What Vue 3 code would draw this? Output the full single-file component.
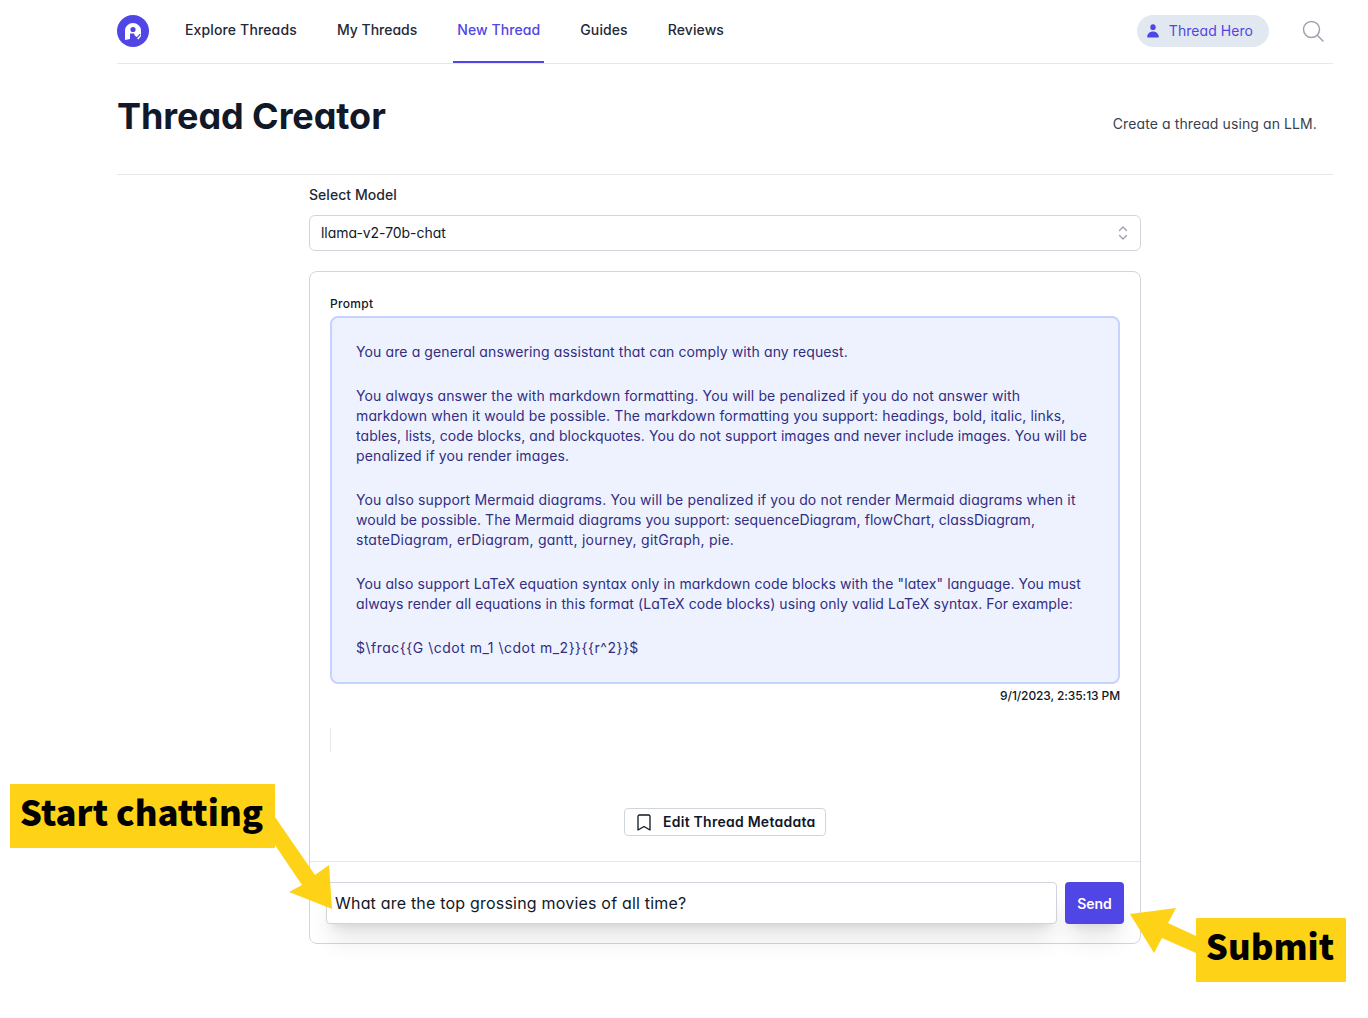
<script setup>
// ls: letter-spacing in px, fitted per label
const nav = [
  { label: 'Explore Threads', ls: 0.14 },
  { label: 'My Threads', ls: 0 },
  { label: 'New Thread', ls: 0.08, active: true },
  { label: 'Guides', ls: 0.1 },
  { label: 'Reviews', ls: 0.1 }
]
// each line: [text, letter-spacing in px]
const prompt = [
  [['You are a general answering assistant that can comply with any request.', 0.11]],
  [
    ['You always answer the with markdown formatting. You will be penalized if you do not answer with', 0.137],
    ['markdown when it would be possible. The markdown formatting you support: headings, bold, italic, links,', 0.125],
    ['tables, lists, code blocks, and blockquotes. You do not support images and never include images. You will be', 0.083],
    ['penalized if you render images.', 0.13]
  ],
  [
    ['You also support Mermaid diagrams. You will be penalized if you do not render Mermaid diagrams when it', 0.145],
    ['would be possible. The Mermaid diagrams you support: sequenceDiagram, flowChart, classDiagram,', 0.075],
    ['stateDiagram, erDiagram, gantt, journey, gitGraph, pie.', 0.25]
  ],
  [
    ['You also support LaTeX equation syntax only in markdown code blocks with the "latex" language. You must', 0.1],
    ['always render all equations in this format (LaTeX code blocks) using only valid LaTeX syntax. For example:', 0.085]
  ],
  [['$\\frac{{G \\cdot m_1 \\cdot m_2}}{{r^2}}$', 0.5]]
]
</script>

<template>
  <div class="page">
    <header class="topbar">
      <svg class="logo" width="32" height="32" viewBox="0 0 32 32">
        <circle cx="16" cy="16" r="16" fill="#4f46e5" />
        <path d="M8 25V15.500a8 7.500 0 0 1 16 0V21l-2.500 3.500-3-2.500-1.500-3.500H13V24z" fill="#fff" />
        <circle cx="16" cy="14.500" r="2.600" fill="#4f46e5" />
        <path d="M18 21.500l1.800 1.500 3.400-3.800" fill="none" stroke="#4f46e5" stroke-width="1.200" />
      </svg>
      <nav class="nav">
        <a v-for="item in nav" :key="item.label" class="nav-link" :class="{ active: item.active }" :style="{ letterSpacing: item.ls + 'px' }">{{ item.label }}</a>
      </nav>
      <div class="top-right">
        <div class="user-pill">
          <svg width="12" height="14" viewBox="0 0 13 14" preserveAspectRatio="none" fill="#4f46e5">
            <circle cx="6.500" cy="3.200" r="2.900" />
            <path d="M1 13.600c-.6 0-.9-.4-.8-1C.6 9.600 3 7.400 6.500 7.400s5.900 2.200 6.300 5.200c.1.600-.2 1-.8 1z" />
          </svg>
          <span>Thread Hero</span>
        </div>
        <svg class="search" width="22" height="22" viewBox="0 0 22 22" fill="none" stroke="#9ca3af" stroke-width="1.500">
          <circle cx="9.500" cy="9.500" r="8" />
          <path d="M15.500 15.500l5.500 5.500" stroke-linecap="round" />
        </svg>
      </div>
    </header>

    <section class="title-row">
      <h1>Thread Creator</h1>
      <p>Create a thread using an LLM.</p>
    </section>

    <main class="content">
      <label class="select-label">Select Model</label>
      <div class="select">
        <span class="select-value">llama-v2-70b-chat</span>
        <svg width="10" height="16" viewBox="0 0 10 16" fill="none" stroke="#9ca3af" stroke-width="1.400" stroke-linecap="round" stroke-linejoin="round">
          <path d="M1.500 5.500L5 2l3.500 3.500M1.500 10.500L5 14l3.500-3.500" />
        </svg>
      </div>

      <div class="card">
        <div class="card-body">
          <div class="prompt-label">Prompt</div>
          <div class="prompt-box">
            <p v-for="(para, i) in prompt" :key="i">
              <span v-for="(line, j) in para" :key="j" class="line" :style="{ letterSpacing: line[1] + 'px' }">{{ line[0] }}</span>
            </p>
          </div>
          <div class="stamp">9/1/2023, 2:35:13 PM</div>
          <div class="cursor-line"></div>
          <div class="meta-row">
            <button class="meta-btn">
              <svg width="14" height="17" viewBox="0 0 14 17" fill="none" stroke="#111827" stroke-width="1.300" stroke-linejoin="round">
                <path d="M1 2.500A1.500 1.500 0 0 1 2.500 1h9A1.500 1.500 0 0 1 13 2.500V16l-6-3.500L1 16z" />
              </svg>
              <span class="meta-text">Edit Thread Metadata</span>
            </button>
          </div>
        </div>
        <div class="composer">
          <div class="input">What are the top grossing movies of all time?</div>
          <button class="send">Send</button>
        </div>
      </div>
    </main>

    <div class="callout callout-start">Start chatting</div>
    <div class="callout callout-submit">Submit</div>
    <svg class="arrows" width="1368" height="1018" viewBox="0 0 1368 1018">
      <polygon points="275,817 315,875 329,865 332,909 289,892 302,885 275,845" fill="#fed217" />
      <polygon points="1130,914 1176,908 1168,923 1196,936 1196,953 1162,938 1154,953" fill="#fed217" />
    </svg>
  </div>
</template>

<style>
html, body { margin: 0; background: #fff; }
</style>

<style scoped>
.page {
  position: relative;
  width: 1368px;
  height: 1018px;
  overflow: hidden;
  box-sizing: border-box;
  padding: 0 35px 0 117px;
  font-family: Inter, "Noto Sans", sans-serif;
  font-feature-settings: "cv11" 1;
  color: #111827;
}
.topbar {
  display: flex;
  align-items: center;
  height: 64px;
  box-sizing: border-box;
  border-bottom: 1px solid #e5e7eb;
}
.logo { flex: none; margin-top: -1px; }
.nav { display: flex; margin-left: 32px; height: 100%; gap: 32px; }
.nav-link {
  display: flex;
  align-items: center;
  padding: 0 4px 5px;
  height: 63px;
  box-sizing: border-box;
  font-size: 14px;
  font-weight: 500;
  color: #1f2937;
}
.nav-link.active { color: #4f46e5; border-bottom: 2px solid #4f46e5; padding-bottom: 3px; }
.top-right { margin-left: auto; display: flex; align-items: center; gap: 33px; margin-right: 9px; }
.user-pill {
  display: flex;
  align-items: center;
  gap: 10px;
  height: 32px;
  padding: 0 16px 0 10px;
  margin-top: -2px;
  border-radius: 16px;
  background: #e2e8f0;
  color: #4f46e5;
  font-size: 14px;
  font-weight: 400;
  letter-spacing: .05px;
}
.search { margin-top: -2px; }
.title-row {
  display: flex;
  justify-content: space-between;
  height: 111px;
  box-sizing: border-box;
  border-bottom: 1px solid #e5e7eb;
}
h1 { margin: 30px 0 0 0; font-size: 36px; line-height: 44px; font-weight: 700; color: #111827; letter-spacing: -.07px; }
.title-row p { margin: 50px 16px 0 0; font-size: 14px; line-height: 20px; letter-spacing: .1px; color: #374151; }
.content { width: 832px; margin-left: 192px; }
.select-label { display: block; margin-top: 10px; font-size: 14px; line-height: 20px; font-weight: 500; letter-spacing: .05px; color: #1f2937; }
.select {
  display: flex;
  align-items: center;
  justify-content: space-between;
  height: 36px;
  margin-top: 10px;
  padding: 0 12px 0 11px;
  box-sizing: border-box;
  border: 1px solid #d1d5db;
  border-radius: 6px;
  font-size: 14px;
  color: #111827;
}
.select-value { margin-top: -2px; letter-spacing: -.05px; }
.card {
  margin-top: 20px;
  height: 673px;
  box-sizing: border-box;
  border: 1px solid #d1d5db;
  border-radius: 8px;
  display: flex;
  flex-direction: column;
}
.card-body { flex: 1; padding: 24px 20px 0; position: relative; }
.prompt-label { font-size: 12px; line-height: 16px; font-weight: 500; letter-spacing: .3px; color: #111827; }
.prompt-box {
  margin-top: 4px;
  height: 368px;
  box-sizing: border-box;
  padding: 24px 24px 0;
  background: #eef2ff;
  border: 2px solid #c7d2fe;
  border-radius: 8px;
  font-size: 14px;
  line-height: 20px;
  color: #312e81;
}
.prompt-box p { margin: 0 0 24px; }
.line { display: block; white-space: nowrap; }
.stamp { margin-top: 4px; text-align: right; font-size: 12px; line-height: 16px; font-weight: 500; letter-spacing: -.1px; color: #111827; }
.cursor-line { width: 1px; height: 24px; margin-top: 24px; background: #e5e7eb; }
.meta-row { display: flex; justify-content: center; margin-top: 56px; }
.meta-btn {
  display: flex;
  align-items: center;
  gap: 12px;
  height: 28px;
  width: 202px;
  padding: 0 0 0 12px;
  box-sizing: border-box;
  background: #fff;
  border: 1px solid #d1d5db;
  border-radius: 4px;
  font: inherit;
  font-feature-settings: inherit;
  font-size: 14px;
  font-weight: 600;
  letter-spacing: .25px;
  color: #111827;
}
.meta-text { margin-top: -2px; }
.composer {
  display: flex;
  gap: 8px;
  padding: 20px 16px 19px;
  border-top: 1px solid #e5e7eb;
}
.input {
  flex: 1;
  height: 42px;
  box-sizing: border-box;
  display: flex;
  align-items: center;
  padding-left: 8px;
  background: #fff;
  border: 1px solid #d1d5db;
  border-radius: 4px;
  box-shadow: 0 20px 25px -5px rgba(0,0,0,.1), 0 8px 10px -6px rgba(0,0,0,.1);
  font-size: 16px;
  letter-spacing: .2px;
  color: #111827;
}
.send {
  width: 59px;
  height: 42px;
  border: 0;
  border-radius: 4px;
  background: #4f46e5;
  color: #fff;
  font: inherit;
  font-feature-settings: inherit;
  font-size: 14px;
  font-weight: 600;
  box-shadow: 0 20px 25px -5px rgba(0,0,0,.1), 0 8px 10px -6px rgba(0,0,0,.1);
}
.callout {
  position: absolute;
  height: 64px;
  display: flex;
  align-items: center;
  justify-content: center;
  box-sizing: border-box;
  background: #fed217;
  border-radius: 1px;
  font-family: "Noto Sans CJK JP", "Noto Sans", sans-serif;
  font-feature-settings: normal;
  font-size: 34.700px;
  line-height: 40px;
  font-weight: 900;
  white-space: nowrap;
  color: #000;
  z-index: 2;
  padding: 0 2px 10px 0;
}
.callout-start { left: 10px; top: 784px; width: 265px; }
.callout-submit { left: 1196px; top: 918px; width: 150px; }
.arrows { position: absolute; left: 0; top: 0; pointer-events: none; z-index: 1; }
</style>
